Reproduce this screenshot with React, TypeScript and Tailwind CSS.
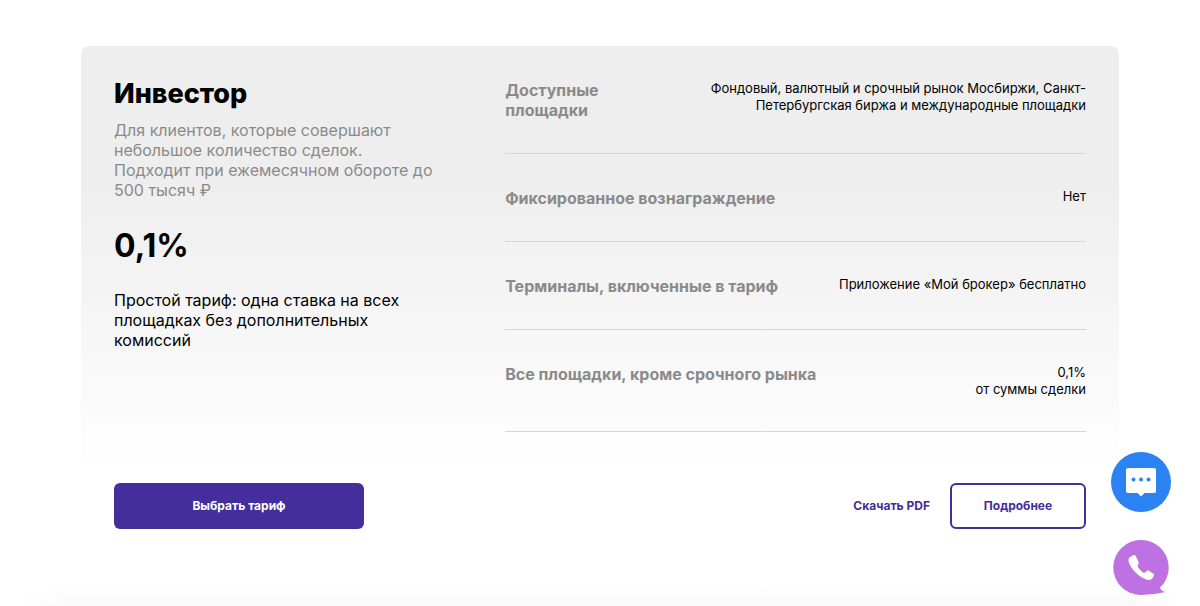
interface TariffRow {
  title: string;
  value: string[];
  narrowTitle?: boolean;
}

const rows: TariffRow[] = [
  {
    title: "Доступные площадки",
    value: ["Фондовый, валютный и срочный рынок Мосбиржи, Санкт-Петербургская биржа и международные площадки"],
    narrowTitle: true,
  },
  { title: "Фиксированное вознаграждение", value: ["Нет"] },
  { title: "Терминалы, включенные в тариф", value: ["Приложение «Мой брокер» бесплатно"] },
  { title: "Все площадки, кроме срочного рынка", value: ["0,1%", "от суммы сделки"] },
];

function TariffDetails() {
  return (
    <dl>
      {rows.map((row) => (
        <div
          key={row.title}
          className="flex justify-between border-b border-[#d6d6d6] pt-[34px] pb-[33px] first:pt-0"
        >
          <dt
            className={
              row.narrowTitle
                ? "w-[180px] shrink-0 pr-16 text-base leading-5 font-bold text-[#8a8a8a]"
                : "text-base leading-5 font-bold text-[#8a8a8a]"
            }
          >
            {row.title}
          </dt>
          <dd className="text-right text-[13px] leading-[17px]">
            {row.value.map((line) => (
              <span key={line} className="block">
                {line}
              </span>
            ))}
          </dd>
        </div>
      ))}
    </dl>
  );
}

function ContactButtons() {
  return (
    <div className="fixed right-[29px] bottom-[10px] flex flex-col items-center gap-7">
      <button type="button" aria-label="Чат" className="cursor-pointer">
        <svg width="60" height="60" viewBox="0 0 60 60">
          <circle cx="30" cy="30" r="30" fill="#2b83f3" />
          <path
            d="M17 16h26a2 2 0 0 1 2 2v21a2 2 0 0 1-2 2h-9.500L30 44.500 26.500 41H17a2 2 0 0 1-2-2V18a2 2 0 0 1 2-2z"
            fill="#fff"
          />
          <circle cx="22.500" cy="27.500" r="2" fill="#2b83f3" />
          <circle cx="30" cy="27.500" r="2" fill="#2b83f3" />
          <circle cx="37.500" cy="27.500" r="2" fill="#2b83f3" />
        </svg>
      </button>
      <button type="button" aria-label="Позвонить" className="cursor-pointer">
        <svg width="56" height="56" viewBox="0 0 56 56">
          <path d="M28 0a27.500 27.500 0 0 1 18.500 48q2 3 6 4-12 3-25 3A27.500 27.500 0 0 1 28 0z" fill="#bd71e3" />
          <path
            d="M19.500 15.500l-3 2c-1.500 1.500-1.300 4 .2 7C20 31 26 36.500 32.500 39.300c2.500 1 5 .9 6.500-.5l1.700-2.600c.6-1 .3-2-.5-2.700l-4-2.500c-1.200-.7-2.200-.6-3 .3l-1.200 1.500c-1 .2-1.700-.1-2.600-.8-2-1.700-3.400-3.200-4.500-5-.5-1-.4-1.600.2-2.400.8-1 .8-2 .2-3.200L22.800 16c-.8-1.300-2.200-1.300-3.300-.5z"
            fill="#fff"
          />
        </svg>
      </button>
    </div>
  );
}

export default function App() {
  return (
    <div className="min-h-screen bg-white font-['Inter','Noto_Sans',sans-serif] text-black">
      <main className="px-[81px] pt-[46px]">
        <article className="rounded-lg bg-linear-to-b from-[#eeeeee] from-25% to-white to-80% px-[33px] pt-[34px] pb-[57px]">
          <div className="grid grid-cols-[2fr_3fr] gap-x-1">
            <div className="pr-16">
              <h2 className="text-[27px] leading-7 font-extrabold">Инвестор</h2>
              <p className="mt-3 text-base leading-5 text-[#8a8a8a]">
                Для клиентов, которые совершают небольшое количество сделок. Подходит при ежемесячном обороте до
                500 тысяч ₽
              </p>
              <p className="mt-[26px] text-[32px] leading-10 font-bold">0,1%</p>
              <p className="mt-6 text-base leading-5">
                Простой тариф: одна ставка на всех площадках без дополнительных комиссий
              </p>
            </div>
            <TariffDetails />
          </div>
          <div className="mt-[51px] flex items-center text-xs font-bold">
            <button type="button" className="h-[46px] w-[250px] cursor-pointer rounded-md bg-[#432e9b] text-white">
              Выбрать тариф
            </button>
            <a href="#pdf" className="mr-5 ml-auto text-[#432e9b]">
              Скачать PDF
            </a>
            <button
              type="button"
              className="h-[46px] w-[136px] cursor-pointer rounded-md border-2 border-[#432e9b] bg-white text-[#432e9b]"
            >
              Подробнее
            </button>
          </div>
        </article>
      </main>
      {/* soft shade above the next block */}
      <div className="mx-5 h-5 bg-linear-to-b from-white to-[#f9f9f9] [mask-image:linear-gradient(to_right,transparent,black_50px,black_calc(100%_-_50px),transparent)]" />
      <ContactButtons />
    </div>
  );
}
